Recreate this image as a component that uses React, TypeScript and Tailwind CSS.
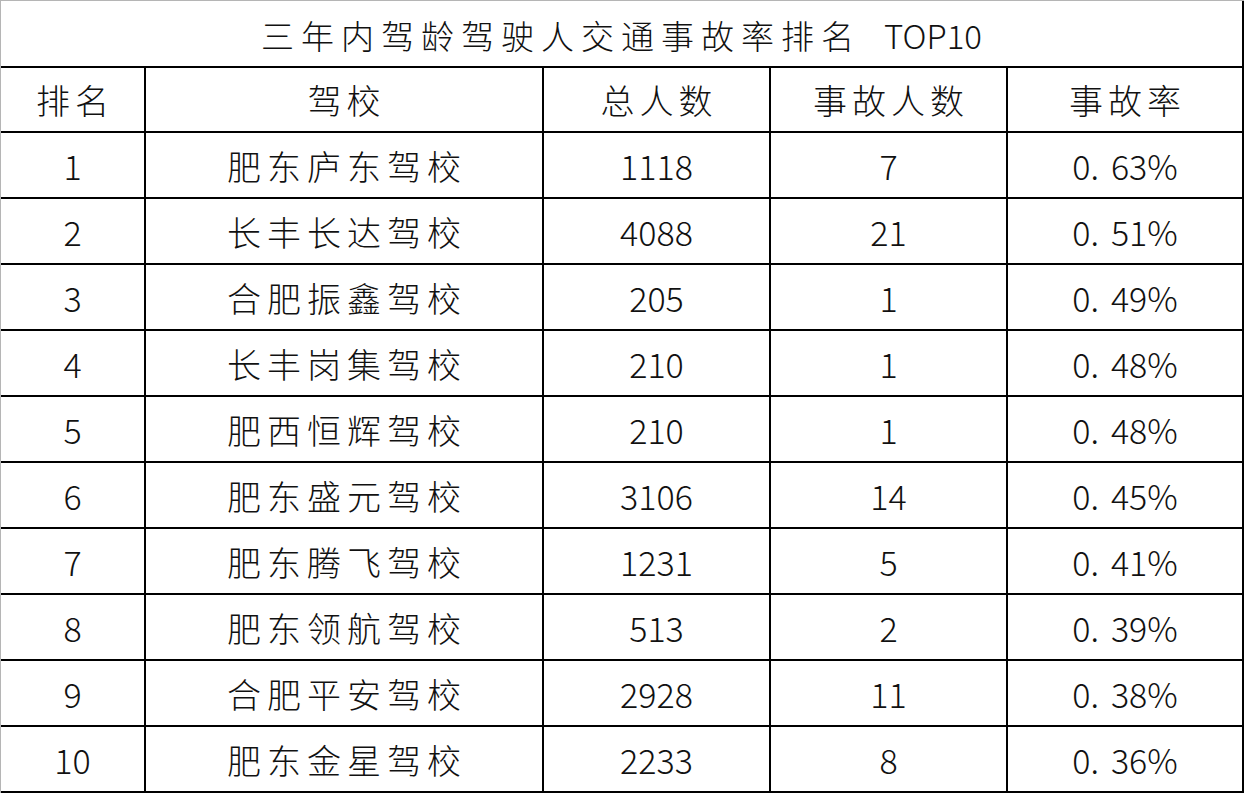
const ROWS = [
  ["1", "肥东庐东驾校", "1118", "7", "0.63%"],
  ["2", "长丰长达驾校", "4088", "21", "0.51%"],
  ["3", "合肥振鑫驾校", "205", "1", "0.49%"],
  ["4", "长丰岗集驾校", "210", "1", "0.48%"],
  ["5", "肥西恒辉驾校", "210", "1", "0.48%"],
  ["6", "肥东盛元驾校", "3106", "14", "0.45%"],
  ["7", "肥东腾飞驾校", "1231", "5", "0.41%"],
  ["8", "肥东领航驾校", "513", "2", "0.39%"],
  ["9", "合肥平安驾校", "2928", "11", "0.38%"],
  ["10", "肥东金星驾校", "2233", "8", "0.36%"],
];

const HEADERS = ["排名", "驾校", "总人数", "事故人数", "事故率"];
const WIDTHS = ["w-[145px]", "w-[398px]", "w-[227px]", "w-[237px]", "w-[236px]"];

// the source image puts a gap after the decimal point: "0. 63%"
function Rate({ value }: { value: string }) {
  const [whole, frac] = value.split(".");
  return (
    <span>
      {whole}.<span className="ml-[12px]">{frac}</span>
    </span>
  );
}

function Row({ cells, height, header }: { cells: string[]; height: string; header?: boolean }) {
  return (
    <div className={`flex ${height} border-b-2 border-black`}>
      {cells.map((c, i) => {
        const spacing = header ? "tracking-[5px] pl-[5px]" : i === 1 ? "tracking-[6px] pl-[6px]" : "tracking-normal";
        return (
          <div
            key={i}
            className={`${WIDTHS[i]} flex shrink-0 items-center justify-center border-r-2 border-black ${spacing}`}
          >
            {!header && i === 4 ? <Rate value={c} /> : c}
          </div>
        );
      })}
    </div>
  );
}

export default function App() {
  return (
    <div
      className="min-h-[794px] w-[1246px] bg-white text-[34px] font-light text-[#111]"
      style={{ fontFamily: '"Noto Sans CJK SC", "Noto Sans", sans-serif' }}
    >
      <div className="w-[1244px] border-l border-t border-[#b5b5b5]">
        <div className="flex h-[67px] items-center justify-center border-b-2 border-r-2 border-black pt-1 text-[33px]">
          <span className="tracking-[7px]">三年内驾龄驾驶人交通事故率排名</span>
          <span className="ml-[23px]">TOP10</span>
        </div>
        <Row cells={HEADERS} height="h-[65px]" header />
        {ROWS.map((r) => (
          <Row key={r[0]} cells={r} height="h-[66px]" />
        ))}
      </div>
    </div>
  );
}
